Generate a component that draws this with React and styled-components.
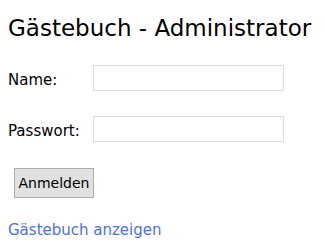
import React from 'react';
import styled, { createGlobalStyle } from 'styled-components';

const GlobalStyle = createGlobalStyle`
  html, body {
    margin: 0;
    padding: 0;
    background: #ffffff;
  }
  body {
    font-family: "DejaVu Sans", Verdana, sans-serif;
    color: #000000;
  }
`;

const Page = styled.div`
  padding: 14px 8px 0 8px;
`;

const Title = styled.h1`
  margin: 0 0 23px 0;
  font-size: 23px;
  font-weight: normal;
  line-height: 28px;
  white-space: nowrap;
`;

const Form = styled.form`
  display: grid;
  grid-template-columns: 85px 191px;
  row-gap: 25px;
  align-items: center;
`;

const Label = styled.label`
  padding-top: 3px;
  font-size: 15px;
  line-height: 18px;
`;

const Input = styled.input`
  box-sizing: border-box;
  width: 191px;
  height: 26px;
  margin: 0;
  padding: 2px 4px;
  border: 1px solid #dddddd;
  background: #ffffff;
  font-family: inherit;
  font-size: 14px;
  outline: none;
`;

const Actions = styled.div`
  grid-column: 1 / span 2;
  padding: 1px 0 0 6px;
`;

const Button = styled.button`
  box-sizing: border-box;
  display: block;
  width: 80px;
  height: 30px;
  margin: 0;
  padding: 0;
  border: 1px solid #adadad;
  background: #e1e1e1;
  color: #000000;
  font-family: inherit;
  font-size: 14px;
  cursor: pointer;
`;

const Link = styled.a`
  display: block;
  width: max-content;
  margin-top: 23px;
  font-size: 15px;
  line-height: 18px;
  color: #4f6fe6;
  text-decoration: none;
`;

export default function App() {
  return (
    <>
      <GlobalStyle />
      <Page>
        <Title>Gästebuch - Administrator</Title>
        <Form onSubmit={(e) => e.preventDefault()}>
          <Label htmlFor="name">Name:</Label>
          <Input id="name" type="text" />
          <Label htmlFor="pw">Passwort:</Label>
          <Input id="pw" type="password" />
          <Actions>
            <Button type="submit">Anmelden</Button>
          </Actions>
        </Form>
        <Link href="#">Gästebuch anzeigen</Link>
      </Page>
    </>
  );
}
